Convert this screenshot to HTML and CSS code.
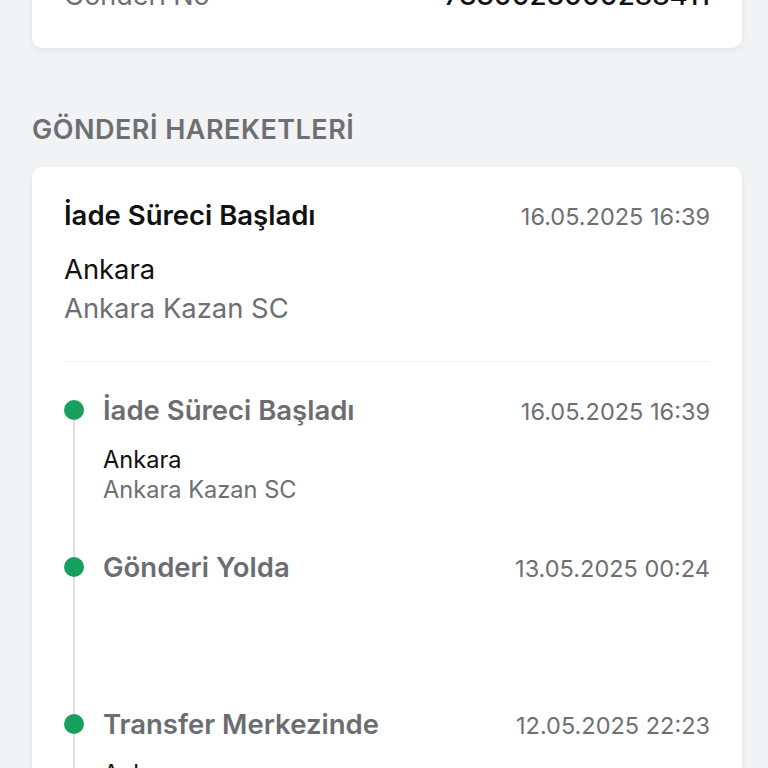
FILE: index.html
```html
<!DOCTYPE html>
<html lang="tr">
<head>
  <meta charset="UTF-8" />
  <meta name="viewport" content="width=device-width, initial-scale=1.0" />
  <title>Gönderi Takip</title>
  <link rel="stylesheet" href="styles.css">
</head>
<body>
  <!-- Shipment summary card (scrolled partly out of view) -->
  <div class="card summary">
    <div class="summary-row">
      <span class="summary-label">Gönderi No</span>
      <span class="summary-value">7330023000288411</span>
    </div>
  </div>

  <h2 class="section-title">GÖNDERİ HAREKETLERİ</h2>

  <div class="card moves">
    <!-- Latest movement -->
    <div class="latest">
      <div class="latest-head">
        <span class="latest-title">İade Süreci Başladı</span>
        <span class="date">16.05.2025 16:39</span>
      </div>
      <p class="latest-city">Ankara</p>
      <p class="latest-branch">Ankara Kazan SC</p>
    </div>

    <!-- Timeline -->
    <div class="timeline">
      <div class="event">
        <div class="rail"><span class="dot"></span></div>
        <div class="event-body">
          <div class="event-head">
            <span class="event-title">İade Süreci Başladı</span>
            <span class="date">16.05.2025 16:39</span>
          </div>
          <div class="event-place">
            <p class="event-city">Ankara</p>
            <p class="event-branch">Ankara Kazan SC</p>
          </div>
        </div>
      </div>

      <div class="event">
        <div class="rail"><span class="dot"></span></div>
        <div class="event-body">
          <div class="event-head">
            <span class="event-title">Gönderi Yolda</span>
            <span class="date">13.05.2025 00:24</span>
          </div>
          <div class="event-place"></div>
        </div>
      </div>

      <div class="event">
        <div class="rail"><span class="dot"></span></div>
        <div class="event-body">
          <div class="event-head">
            <span class="event-title">Transfer Merkezinde</span>
            <span class="date">12.05.2025 22:23</span>
          </div>
          <div class="event-place">
            <p class="event-city">Ankara</p>
            <p class="event-branch">Ankara Kazan SC</p>
          </div>
        </div>
      </div>
    </div>
  </div>
</body>
</html>
```

FILE: styles.css
```css
body {
  margin: 0;
  padding: 0 26px 0 32px;
  background-color: #f2f3f5;
  font-family: Inter, "Noto Sans", sans-serif;
  color: #111;
  overflow: hidden;
}
p {
  margin: 0;
}
.card {
  background-color: #fff;
  border-radius: 10px;
  box-shadow: 0 2px 6px rgba(0, 0, 0, 0.06);
  padding: 0 32px;
}
.summary {
  margin-top: -45px;
  padding-top: 24px;
  padding-bottom: 36px;
}
.summary-row {
  display: flex;
  justify-content: space-between;
  align-items: baseline;
  line-height: 32px;
}
.summary-label {
  font-size: 27px;
  color: #6e6f73;
}
.summary-value {
  font-size: 27.7px;
  font-weight: 500;
  color: #111;
}
.section-title {
  margin: 66px 0 21px;
  font-size: 27px;
  line-height: 32px;
  font-weight: 600;
  letter-spacing: 0.5px;
  color: #6e6f73;
}
.moves {
  padding-top: 32px;
  padding-bottom: 40px;
}
.latest {
  padding-bottom: 33px;
  border-bottom: 1px solid #f1f1f2;
}
.latest-head,
.event-head {
  display: flex;
  justify-content: space-between;
  align-items: baseline;
}
.latest-head {
  line-height: 32px;
  margin-bottom: 17px;
}
.latest-title {
  font-size: 27.5px;
  font-weight: 600;
  color: #111;
}
.date {
  font-size: 23.5px;
  color: #6e6f73;
}
.latest-city,
.latest-branch {
  font-size: 27.4px;
  line-height: 39px;
}
.latest-branch {
  color: #6e6f73;
}
.timeline {
  padding-top: 31px;
}
.event {
  display: grid;
  grid-template-columns: 20px 1fr;
  column-gap: 19px;
}
.rail {
  background: linear-gradient(#e1e1e3, #e1e1e3) center top / 2px 100% no-repeat;
}
.event:first-child .rail {
  background-position: center bottom;
  background-size: 2px calc(100% - 17px);
}
.dot {
  display: block;
  width: 20px;
  height: 20px;
  margin-top: 7px;
  border-radius: 50%;
  background-color: #17a05d;
}
.event-body {
  padding-bottom: 45px;
}
.event-head {
  line-height: 34px;
  margin-bottom: 16px;
}
.event-title {
  font-size: 27.5px;
  font-weight: 600;
  color: #6b6d71;
}
.event-place {
  min-height: 60px;
}
.event-city,
.event-branch {
  font-size: 23.6px;
  line-height: 30px;
}
.event-branch {
  color: #6e6f73;
}
```
